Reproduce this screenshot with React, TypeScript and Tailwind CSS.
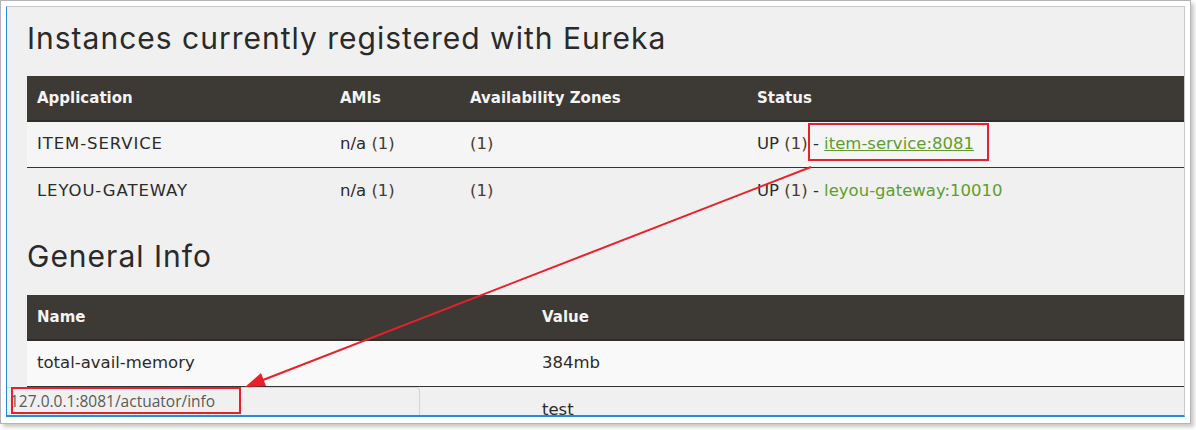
import React from "react";

const head = { fontFamily: "Inter, 'Noto Sans', sans-serif" };
const body = { fontFamily: "'DejaVu Sans', 'Noto Sans', sans-serif" };

const apps = [
  { name: "ITEM-SERVICE", link: "item-service:8081", hover: true },
  { name: "LEYOU-GATEWAY", link: "leyou-gateway:10010", hover: false },
];

function Th({ children }: { children: React.ReactNode }) {
  return (
    <div className="text-[15px] font-bold text-[#f4f4f4]" style={body}>
      {children}
    </div>
  );
}

export default function App() {
  return (
    <div className="relative h-[430px] w-[1196px] bg-white">
      <div className="h-[424px] w-[1191px] border border-[#b4b4b4] bg-white p-[5px] shadow-[3px_3px_4px_rgba(0,0,0,0.22)]">
        <div className="relative h-[411px] overflow-hidden border-t border-r border-l border-b-2 border-t-[#c8c8c8] border-r-[#c8c8c8] border-l-[#2a86d6] border-b-[#2a8ae0] bg-[#f0f0f0]">
          <div className="pl-[20px] text-[16.5px] text-[#2b2b2b]" style={body}>
            <h1 className="pt-[11px] text-[30px] leading-[40px] font-normal tracking-[1px] text-[#2a2a2a]" style={head}>
              Instances currently registered with Eureka
            </h1>

            <div className="mt-[18px]">
              <div className="grid h-[46px] grid-cols-[303px_130px_287px_1fr] items-center border-b-2 border-[#302d2a] bg-[#3d3935] pl-[10px]">
                <Th>Application</Th>
                <Th>AMIs</Th>
                <Th>Availability Zones</Th>
                <Th>Status</Th>
              </div>
              {apps.map((a, i) => (
                <div
                  key={a.name}
                  className={`grid h-[46px] grid-cols-[303px_130px_287px_1fr] items-center pl-[10px] ${
                    i === 0 ? "border-b border-[#333] bg-[#f5f5f5]" : "bg-[#f0f0f0]"
                  }`}
                >
                  <div className="tracking-[0.9px]">{a.name}</div>
                  <div>
                    n/a <span className="text-[#4a3b30]">(1)</span>
                  </div>
                  <div className="text-[#4a3b30]">(1)</div>
                  <div>
                    UP <span className="text-[#4a3b30]">(1)</span> -{" "}
                    <span className={`text-[#5e9e2c] ${a.hover ? "underline" : ""}`}>{a.link}</span>
                  </div>
                </div>
              ))}
            </div>

            <h2 className="mt-[22px] text-[30px] leading-[40px] font-normal tracking-[1px] text-[#2a2a2a]" style={head}>
              General Info
            </h2>

            <div className="mt-[19px]">
              <div className="grid h-[46px] grid-cols-[505px_1fr] items-center border-b-2 border-[#302d2a] bg-[#3d3935] pl-[10px]">
                <Th>Name</Th>
                <Th>Value</Th>
              </div>
              <div className="grid h-[46px] grid-cols-[505px_1fr] items-center border-b border-[#333] bg-[#f9f9f9] pl-[10px]">
                <div>total-avail-memory</div>
                <div>384mb</div>
              </div>
              <div className="grid h-[46px] grid-cols-[505px_1fr] items-center bg-[#f0f0f0] pl-[10px]">
                <div />
                <div>test</div>
              </div>
            </div>
          </div>

          {/* browser status bar */}
          <div className="absolute bottom-0 left-0 flex h-[28px] w-[413px] items-center rounded-tr-[4px] border-t border-r border-[#d4d4d4] bg-[#f0f0f0] pl-[3px]">
            <span className="text-[15.5px] text-[#5a5a5a]" style={{ fontFamily: "'Open Sans', sans-serif" }}>
              127.0.0.1:8081/actuator/info
            </span>
          </div>
        </div>
      </div>

      {/* annotations */}
      <div className="pointer-events-none absolute top-[123px] left-[808px] h-[38px] w-[181px] border-2 border-[#e8202a]" />
      <div className="pointer-events-none absolute top-[387px] left-[11px] h-[27px] w-[230px] border-2 border-[#e8202a]" />
      <svg className="pointer-events-none absolute top-0 left-0" width="1196" height="430">
        <line x1="811" y1="167" x2="263" y2="380" stroke="#e8202a" strokeWidth="2" />
        <polygon points="245,387 266,386 261,373" fill="#e8202a" />
      </svg>
    </div>
  );
}
